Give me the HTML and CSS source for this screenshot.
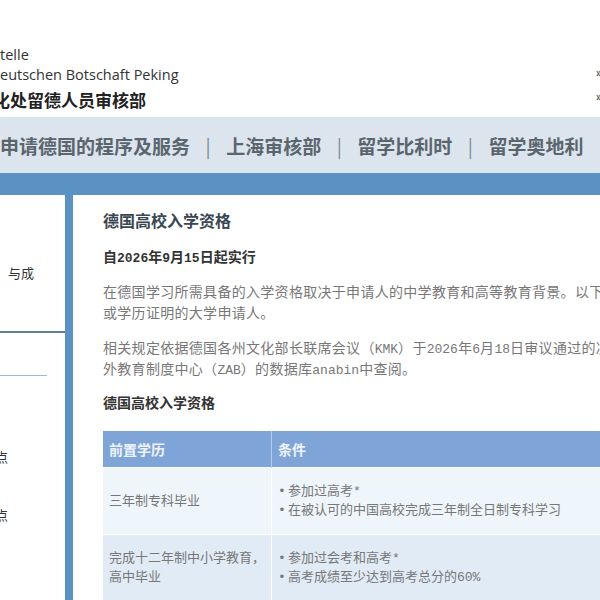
FILE: index.html
```html
<!DOCTYPE html>
<html lang="zh">
<head>
    <meta charset="UTF-8">
    <meta name="viewport" content="width=device-width, initial-scale=1.0">
    <title>德国高校入学资格</title>
    <link rel="stylesheet" href="styles.css">
</head>
<body>
<div class="page">
    <div class="header">
        <div class="brand">
            <div class="brand-en">telle</div>
            <div class="brand-en">eutschen Botschaft Peking</div>
            <div class="brand-cn">化处留德人员审核部</div>
        </div>
        <div class="quick-links">
            <a href="#">» English</a>
            <a href="#">» Deutsch</a>
        </div>
    </div>

    <div class="nav">
        <a href="#">申请德国的程序及服务</a>
        <a href="#">上海审核部</a>
        <a href="#">留学比利时</a>
        <a href="#">留学奥地利</a>
    </div>

    <div class="frame">
        <div class="sidebar">
            <div class="side-top">
                <p class="side-title">与成</p>
            </div>
            <div class="side-list">
                <div class="side-rule"></div>
                <p class="side-item first">点</p>
                <p class="side-item">点</p>
            </div>
        </div>

        <div class="content">
            <h1>德国高校入学资格</h1>
            <p class="effective">自<span class="lat">2026</span>年<span class="lat">9</span>月<span class="lat">15</span>日起实行</p>
            <p class="text">在德国学习所需具备的入学资格取决于申请人的中学教育和高等教育背景。以下规定适用于持有中国高中毕业证书<br>或学历证明的大学申请人。</p>
            <p class="text second">相关规定依据德国各州文化部长联席会议（<span class="lat">KMK</span>）于<span class="lat">2026</span>年<span class="lat">6</span>月<span class="lat">18</span>日审议通过的决议。具体信息可在德国国<br>外教育制度中心（<span class="lat">ZAB</span>）的数据库<span class="lat">anabin</span>中查阅。</p>
            <h2>德国高校入学资格</h2>

            <table class="req-table">
                <tr>
                    <th class="col-first">前置学历</th>
                    <th>条件</th>
                </tr>
                <tr class="row-a">
                    <td>三年制专科毕业</td>
                    <td>
                        <ul>
                            <li>参加过高考*</li>
                            <li>在被认可的中国高校完成三年制全日制专科学习</li>
                        </ul>
                    </td>
                </tr>
                <tr class="row-b">
                    <td>完成十二年制中小学教育，<br>高中毕业</td>
                    <td>
                        <ul>
                            <li>参加过会考和高考*</li>
                            <li>高考成绩至少达到高考总分的60%</li>
                        </ul>
                    </td>
                </tr>
                <tr class="row-a">
                    <td>完成高中学业</td>
                    <td>
                        <ul>
                            <li>参加过高考*</li>
                        </ul>
                    </td>
                </tr>
            </table>
        </div>
    </div>
</div>
</body>
</html>
```

FILE: styles.css
```css
body {
    margin: 0;
    overflow: hidden;
    background: #fff;
    font-family: "Liberation Mono", "Noto Sans CJK SC", monospace;
}
.page {
    width: 1000px;
}

/* header with logo text */
.header {
    display: flex;
    height: 117px;
    background: #fff;
}
.brand {
    flex: 0 0 596px;
    padding-top: 45px;
}
.brand-en {
    font-family: "Open Sans", sans-serif;
    font-size: 14.5px;
    line-height: 20px;
    color: #333;
}
.brand-cn {
    font-family: "Noto Sans CJK SC", sans-serif;
    font-weight: 700;
    font-size: 17px;
    line-height: 26px;
    margin: 2px 0 0 -7px;
    color: #222;
}
.quick-links {
    padding-top: 61px;
    font-family: "Open Sans", sans-serif;
    font-size: 12px;
    line-height: 24px;
}
.quick-links a {
    display: block;
    color: #333;
    text-decoration: none;
}

/* top navigation */
.nav {
    display: flex;
    align-items: center;
    height: 56px;
    background: #dce5ed;
    font-family: "Noto Sans CJK SC", sans-serif;
    font-size: 19px;
    font-weight: 700;
    white-space: nowrap;
}
.nav a {
    color: #5a656e;
    text-decoration: none;
}
.nav a + a::before {
    content: "|";
    margin: 0 15.5px;
    font-weight: 400;
    color: #7d8a94;
}

/* blue frame holding sidebar and content */
.frame {
    display: flex;
    gap: 8px;
    height: 405px;
    padding-top: 22px;
    background: #5a93c3;
}
.sidebar {
    flex: 0 0 65px;
    display: flex;
    flex-direction: column;
    font-size: 13px;
    color: #333;
}
.side-top {
    height: 136px;
    background: #fff;
    border-bottom: 2px solid #5e7f9b;
}
.side-title {
    margin: 70px 0 0 8px;
    line-height: 20px;
}
.side-list {
    flex: 1;
    background: #fff;
}
.side-rule {
    width: 47px;
    height: 1px;
    margin-top: 42px;
    background: #a7bacb;
}
.side-item {
    margin: 38px 0 0 -5px;
    line-height: 20px;
}
.side-item.first {
    margin-top: 73px;
}

.content {
    flex: 1;
    padding: 16px 0 0 30px;
    background: #fff;
    color: #777;
}
.content h1 {
    margin: 0;
    font-size: 16px;
    line-height: 24px;
    color: #3a4753;
}
.effective {
    margin: 12px 0 0;
    font-size: 14px;
    font-weight: 700;
    line-height: 22px;
    color: #333;
}
.text {
    margin: 13px 0 0;
    font-size: 14px;
    line-height: 21px;
    letter-spacing: 0.3px;
    white-space: nowrap;
}
.text.second {
    margin-top: 14px;
}
.lat {
    font-size: 13px;
    letter-spacing: 0;
}
.content h2 {
    margin: 12px 0 0;
    font-size: 14px;
    line-height: 22px;
    color: #333;
}

/* requirements table */
.req-table {
    width: 640px;
    margin-top: 16px;
    border-collapse: collapse;
}
.req-table th {
    height: 36px;
    padding: 0 6px;
    text-align: left;
    font-size: 14px;
    color: #eef3fa;
    background: #7fa5d8;
    border-right: 1px solid #b8cde9;
}
.req-table .col-first {
    width: 156px;
}
.req-table td {
    padding: 14px 6px;
    font-size: 13px;
    line-height: 19px;
    color: #777;
    vertical-align: middle;
    border-top: 1px solid #fff;
    border-right: 1px solid #fff;
}
.row-a td { background: #eef5fb; }
.row-b td { background: #e1ebf5; }
.req-table ul {
    margin: 0;
    padding: 0;
    list-style: none;
}
.req-table li::before {
    content: "•";
    display: inline-block;
    width: 10px;
}
```
